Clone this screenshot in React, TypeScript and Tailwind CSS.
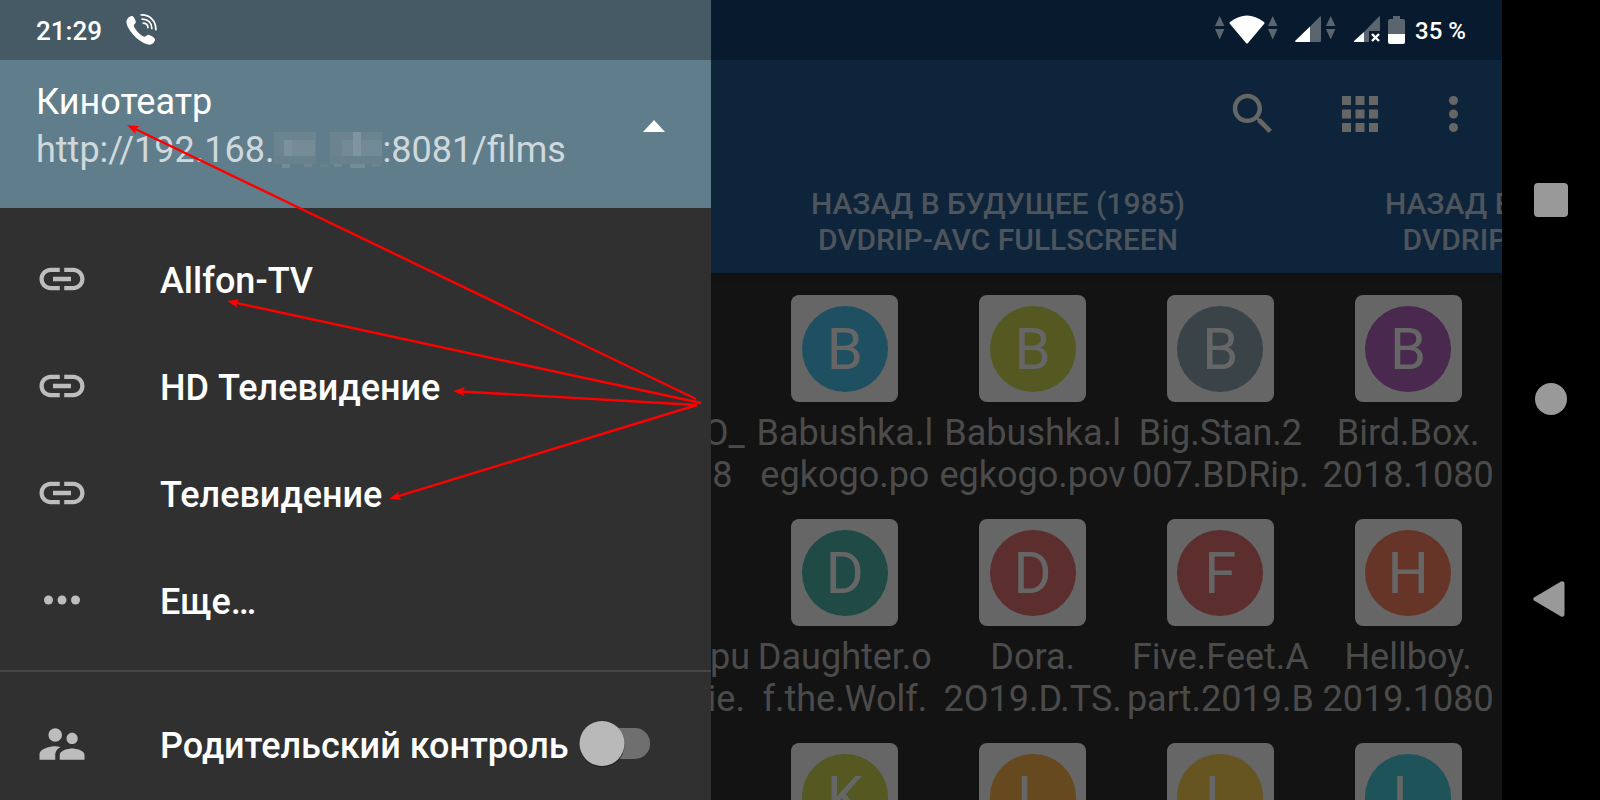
import { useState } from "react";

const links = ["Allfon-TV", "HD Телевидение", "Телевидение"];

const tabs = [
    { top: "НАЗАД В БУДУЩЕЕ (1985)", bottom: "DVDRIP-AVC FULLSCREEN" },
    { top: "НАЗАД В БУДУЩЕЕ (1989)", bottom: "DVDRIP-AVC FULLSCREE" },
];

type Film = { letter: string; color: string; top: string; bottom: string };

const films: Film[] = [
    { letter: "A", color: "bg-[#1f5062]", top: "A.PROMO_", bottom: "film.2018" },
    { letter: "B", color: "bg-[#1f5062]", top: "Babushka.l", bottom: "egkogo.po" },
    { letter: "B", color: "bg-[#555921]", top: "Babushka.l", bottom: "egkogo.pov" },
    { letter: "B", color: "bg-[#3a4347]", top: "Big.Stan.2", bottom: "007.BDRip." },
    { letter: "B", color: "bg-[#4a294f]", top: "Bird.Box.", bottom: "2018.1080" },
    { letter: "C", color: "bg-[#1f4a45]", top: "Chielove.pu", bottom: "Poikolenie." },
    { letter: "D", color: "bg-[#1f4a45]", top: "Daughter.o", bottom: "f.the.Wolf." },
    { letter: "D", color: "bg-[#5c2e2e]", top: "Dora.", bottom: "2O19.D.TS." },
    { letter: "F", color: "bg-[#5c2e2e]", top: "Five.Feet.A", bottom: "part.2019.B" },
    { letter: "H", color: "bg-[#663528]", top: "Hellboy.", bottom: "2019.1080" },
    { letter: "", color: "bg-[#1f5062]", top: "", bottom: "" },
    { letter: "K", color: "bg-[#555921]", top: "", bottom: "" },
    { letter: "L", color: "bg-[#66491e]", top: "", bottom: "" },
    { letter: "L", color: "bg-[#665520]", top: "", bottom: "" },
    { letter: "L", color: "bg-[#1e5459]", top: "", bottom: "" },
];

function LinkIcon() {
    return (
        <svg viewBox="0 0 24 24" className="size-[54px]" fill="#bdbdbd">
            <path d="M3.9 12c0-1.71 1.39-3.1 3.1-3.1h4V7H7c-2.76 0-5 2.24-5 5s2.24 5 5 5h4v-1.9H7c-1.71 0-3.1-1.39-3.1-3.1zM8 13h8v-2H8v2zm9-6h-4v1.9h4c1.71 0 3.1 1.39 3.1 3.1s-1.39 3.1-3.1 3.1h-4V17h4c2.76 0 5-2.24 5-5s-2.24-5-5-5z" />
        </svg>
    );
}

function PeopleIcon() {
    return (
        <svg viewBox="0 0 24 24" className="size-[54px]" fill="#bdbdbd">
            <path d="M16.5 12c1.38 0 2.49-1.12 2.49-2.5S17.88 7 16.5 7C15.12 7 14 8.12 14 9.5s1.12 2.5 2.5 2.5zM9 11c1.66 0 2.99-1.34 2.99-3S10.66 5 9 5C7.34 5 6 6.34 6 8s1.34 3 3 3zm7.5 3c-1.83 0-5.5.92-5.5 2.75V19h11v-2.25c0-1.83-3.67-2.75-5.5-2.75zM9 13c-2.33 0-7 1.17-7 3.5V19h7v-2.25c0-.85.33-2.34 2.37-3.47C10.5 13.1 9.66 13 9 13z" />
        </svg>
    );
}

function CallIcon() {
    return (
        <svg viewBox="0 0 32 32" className="size-8" fill="none">
            <path
                d="M1.6 4.4C3 2.6 5.6 1.4 6.8 2.2C8.4 3.4 10 6.8 9.8 8.2C9.6 9.6 7.6 10.2 7.8 11.8C8.6 15.4 14.6 21.6 18 22.8C19.8 23.2 20.6 21 22 20.8C24 20.8 28.4 23.6 29 25.2C29.4 26.8 26.8 30.2 24.8 30.6C15.6 31.4 1 16.6 .4 8C.4 6.6 .8 5.4 1.6 4.4Z"
                fill="#fff"
            />
            <path
                d="M14.5 1C23.5 .2 30.4 7 29.8 16.4M15.5 5.2C21.8 4.8 26.2 9 25.8 15.2M16.6 9.2C20 9.2 22 11.2 22 14.2"
                stroke="#fff"
                strokeWidth="1.7"
            />
        </svg>
    );
}

function StatusIcons() {
    return (
        <svg viewBox="0 0 192 32" className="h-8 w-48" fill="#fff">
            <g fill="#5a6570">
                <path d="M0 12L4.7 2L9.4 12ZM0 15L4.7 25.5L9.4 15Z" />
                <path d="M53 12L57.7 2L62.4 12ZM53 15L57.7 25.5L62.4 15Z" />
                <path d="M111 12L115.7 2L120.4 12ZM111 15L115.7 25.5L120.4 15Z" />
                <path d="M95 12.5L104.5 3Q106 1.5 106 3.5V27Q106 28 105 28H95Z" />
                <path d="M149 18L163.5 3Q165 1.5 165 3.5V17H154V28H149Z" />
                <path d="M173 7Q173 5 175 5H178V2H185V5H188Q190 5 190 7V20H173Z" />
            </g>
            <path d="M15 8Q32 -5 49 8Q50 9 49 10L33 29Q32 30 31 29L15 10Q14 9 15 8Z" />
            <path d="M95 12.5V28H81Q79.5 28 80.5 26.5Z" />
            <path d="M149 18V28H140Q138 28 139.5 26.5Z" />
            <path d="M157 20L164 27M164 20L157 27" stroke="#fff" strokeWidth="2.4" />
            <path d="M173 20H190V28Q190 30 188 30H175Q173 30 173 28Z" />
        </svg>
    );
}

function HiddenDigits() {
    return (
        <svg viewBox="0 0 108 36" className="h-9 w-[108px]">
            <rect width="42" height="32" fill="#6b8490" />
            <rect y="24" width="42" height="8" fill="#67818d" />
            <rect x="10" y="8" width="31" height="16" fill="#758c97" />
            <rect x="10" y="8" width="8" height="16" fill="#7b919b" />
            <rect x="8" y="32" width="8" height="4" fill="#758c97" />
            <rect x="30" y="32" width="8" height="3" fill="#6f8793" />
            <rect x="46" y="32" width="8" height="3" fill="#68828e" />
            <rect x="56" width="52" height="32" fill="#6b8490" />
            <rect x="56" y="24" width="52" height="8" fill="#67818d" />
            <rect x="68" y="8" width="40" height="16" fill="#728a95" />
            <rect x="79" width="8" height="24" fill="#7f949e" />
            <rect x="60" y="32" width="8" height="3" fill="#6f8793" />
            <rect x="76" y="32" width="15" height="4" fill="#758c97" />
            <rect x="98" y="32" width="8" height="3" fill="#6b8490" />
        </svg>
    );
}

function FilmCard({ film }: { film: Film }) {
    return (
        <a href="#" className="flex h-56 flex-col items-center whitespace-nowrap">
            <div className="flex size-[107px] items-center justify-center rounded-lg bg-[#666]">
                <div
                    className={`flex size-[86px] items-center justify-center rounded-full text-[58px] leading-none text-[#666] ${film.color}`}
                >
                    {film.letter}
                </div>
            </div>
            <div className="mt-[10px] text-center text-4xl leading-[42px] text-[#4b4b4b]">
                <p>{film.top}</p>
                <p>{film.bottom}</p>
            </div>
        </a>
    );
}

// Annotation arrows, all starting from one point at the drawer's right edge
function Arrows() {
    const arrows = [
        { x1: 696, y1: 399, x2: 127, y2: 125 },
        { x1: 701, y1: 403, x2: 227, y2: 301 },
        { x1: 697, y1: 405, x2: 453, y2: 391 },
        { x1: 697, y1: 405, x2: 389, y2: 499 },
    ];

    return (
        <svg
            viewBox="0 0 720 520"
            className="pointer-events-none absolute top-0 left-0 h-[520px] w-[720px]"
        >
            <defs>
                <marker
                    id="head"
                    viewBox="0 0 12 10"
                    refX="4"
                    refY="5"
                    markerWidth="12"
                    markerHeight="10"
                    markerUnits="userSpaceOnUse"
                    orient="auto"
                >
                    <path d="M12 5L0 .5L3 5L0 9.5Z" fill="#f00" />
                </marker>
            </defs>
            {arrows.map((a) => {
                const len = Math.hypot(a.x2 - a.x1, a.y2 - a.y1);
                const k = (len - 8) / len;
                return (
                    <line
                        key={a.y2}
                        x1={a.x1}
                        y1={a.y1}
                        x2={a.x1 + (a.x2 - a.x1) * k}
                        y2={a.y1 + (a.y2 - a.y1) * k}
                        stroke="#f00"
                        strokeWidth="2.4"
                        markerEnd="url(#head)"
                    />
                );
            })}
        </svg>
    );
}

function Drawer() {
    const [locked, setLocked] = useState(false);

    return (
        <aside className="absolute inset-y-0 left-0 flex w-4/9 flex-col bg-[#303030] text-white">
            <div className="flex h-15 shrink-0 items-center gap-6 bg-[#455a64] px-9">
                <span className="pt-0.5 text-[26px] font-medium">21:29</span>
                <CallIcon />
            </div>
            <div className="flex h-37 shrink-0 items-center justify-between bg-[#607d8b] pr-[34px] pb-4 pl-9">
                <div className="text-4xl leading-[48px]">
                    <h1>Кинотеатр</h1>
                    <p className="flex items-center text-[#cfd8dc]">
                        http://192.168.
                        <HiddenDigits />
                        :8081/films
                    </p>
                </div>
                <button aria-label="Список" className="px-3">
                    <svg viewBox="0 0 22 12" className="h-3 w-[22px]" fill="#fff">
                        <path d="M0 12L11 0L22 12Z" />
                    </svg>
                </button>
            </div>
            <nav className="flex flex-col border-b-2 border-[#464646] py-[17px] text-4xl font-medium">
                {links.map((name) => (
                    <a key={name} href="#" className="flex h-[107px] items-center gap-[71px] pl-[35px]">
                        <LinkIcon />
                        <span className="pt-1">{name}</span>
                    </a>
                ))}
                <a href="#" className="flex h-[107px] items-center gap-[71px] pl-[35px]">
                    <svg viewBox="0 0 24 24" className="size-[54px]" fill="#bdbdbd">
                        <circle cx="6" cy="12" r="2" />
                        <circle cx="12" cy="12" r="2" />
                        <circle cx="18" cy="12" r="2" />
                    </svg>
                    <span className="pt-1">Еще…</span>
                </a>
            </nav>
            <label className="mt-[18px] flex h-[107px] items-center pl-[35px] text-4xl font-medium whitespace-nowrap">
                <PeopleIcon />
                <span className="ml-[71px] pt-1">Родительский контроль</span>
                <input
                    type="checkbox"
                    checked={locked}
                    onChange={(e) => setLocked(e.target.checked)}
                    className="sr-only"
                />
                <svg viewBox="0 0 74 48" className="ml-[10px] h-12 w-[74px]">
                    <rect x="6" y="8" width="65" height="31" rx="15" fill="#6f6f6f" />
                    <circle cx={locked ? 51 : 23} cy="25" r="22.5" fill="#262626" />
                    <circle cx={locked ? 51 : 23} cy="23.5" r="22.5" fill="#b9b9b9" />
                </svg>
            </label>
        </aside>
    );
}

export default function App() {
    return (
        <div className="relative flex h-screen w-full overflow-hidden bg-black font-[Roboto,sans-serif]">
            <main className="flex min-w-0 flex-1 flex-col overflow-hidden bg-[#131313]">
                <div className="flex h-15 shrink-0 items-center justify-end gap-2 bg-[#081a2e] pr-9 text-2xl font-medium text-white">
                    <StatusIcons />
                    <span className="pt-0.5">35 %</span>
                </div>
                <header className="shrink-0 bg-[#0d243b] shadow-md">
                    <div className="flex h-[107px] items-center justify-end gap-[53px] pr-[35px]">
                        <button aria-label="Поиск">
                            <svg viewBox="0 0 24 24" className="size-[54px]" fill="#666">
                                <path d="M15.5 14h-.79l-.28-.27C15.41 12.59 16 11.11 16 9.5 16 5.91 13.09 3 9.5 3S3 5.91 3 9.5 5.91 16 9.5 16c1.61 0 3.09-.59 4.23-1.57l.27.28v.79l5 4.99L20.49 19l-4.99-5zm-6 0C7.01 14 5 11.99 5 9.5S7.01 5 9.5 5 14 7.01 14 9.5 11.99 14 9.5 14z" />
                            </svg>
                        </button>
                        <button aria-label="Сетка">
                            <svg viewBox="0 0 24 24" className="size-[54px]" fill="#666">
                                <path d="M4 8h4V4H4v4zm6 12h4v-4h-4v4zm-6 0h4v-4H4v4zm0-6h4v-4H4v4zm6 0h4v-4h-4v4zm6-10v4h4V4h-4zm-6 4h4V4h-4v4zm6 6h4v-4h-4v4zm0 6h4v-4h-4v4z" />
                            </svg>
                        </button>
                        <button aria-label="Меню">
                            <svg viewBox="6 0 12 24" className="h-[54px] w-[27px]" fill="#666">
                                <circle cx="12" cy="6" r="2" />
                                <circle cx="12" cy="12" r="2" />
                                <circle cx="12" cy="18" r="2" />
                            </svg>
                        </button>
                    </div>
                    <div className="flex h-[106px] items-center pt-1 pl-[711px] text-center text-3xl leading-9 font-medium whitespace-nowrap text-[#4d545c]">
                        {tabs.map((tab) => (
                            <button key={tab.top} className="w-[574px] shrink-0">
                                <p>{tab.top}</p>
                                <p>{tab.bottom}</p>
                            </button>
                        ))}
                    </div>
                </header>
                <div className="grid grid-cols-8 pt-[22px] [&>*:nth-child(5n+1)]:col-start-4">
                    {films.map((film, i) => (
                        <FilmCard key={i} film={film} />
                    ))}
                </div>
            </main>
            <nav className="flex w-[98px] shrink-0 flex-col items-center justify-around py-[100px]">
                <button aria-label="Обзор" className="size-[34px] rounded-sm bg-[#999]" />
                <button aria-label="Домой" className="size-8 rounded-full bg-[#999]" />
                <button aria-label="Назад" className="pr-1">
                    <svg viewBox="0 0 32 36" className="h-9 w-8" fill="#999">
                        <path d="M1 16.5L28 .5Q31.5 -.5 31.5 3V33Q31.5 36.5 28 35.5L1 19.5Q-.5 18 1 16.5Z" />
                    </svg>
                </button>
            </nav>
            <Drawer />
            <Arrows />
        </div>
    );
}
